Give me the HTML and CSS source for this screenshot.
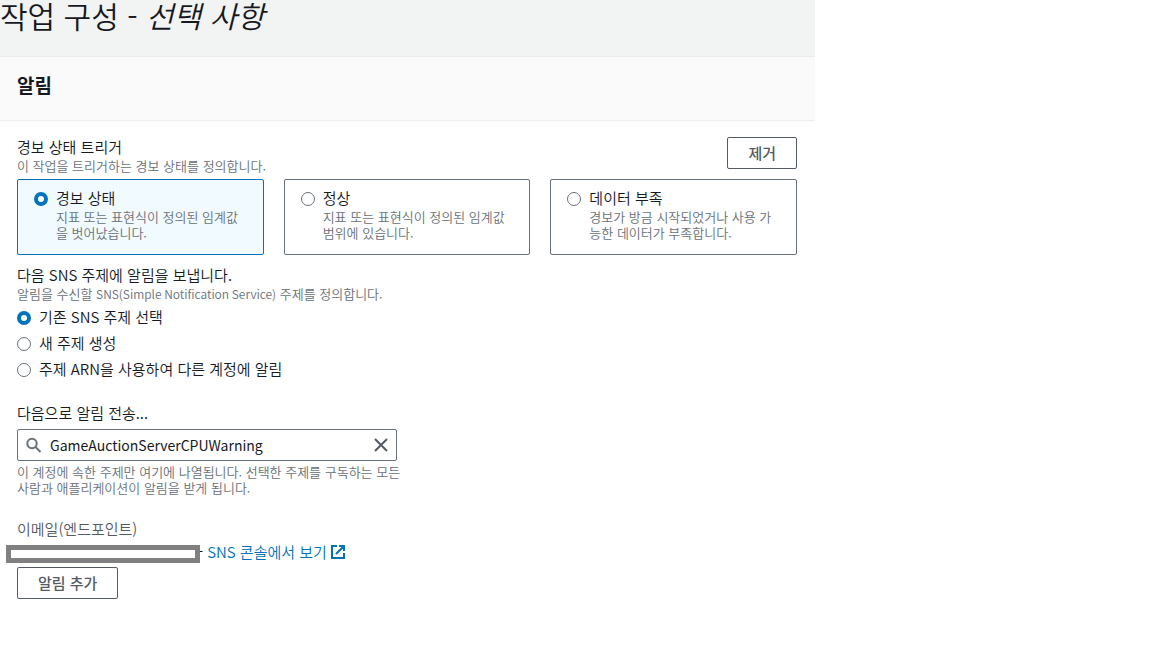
FILE: index.html
```html
<!DOCTYPE html>
<html lang="ko">
<head>
<meta charset="utf-8">
<meta name="viewport" content="width=device-width, initial-scale=1">
<title>작업 구성</title>
<link rel="stylesheet" href="styles.css">
</head>
<body>
<main class="page">
  <header class="page-header">
    <h1 class="page-title">작업 구성 - <em>선택 사항</em></h1>
  </header>
  <div class="panel-header">
    <h2 class="panel-title">알림</h2>
  </div>
  <form class="panel-body">
    <section class="trigger">
      <div class="trigger-head">
        <div>
          <h3 class="label" id="trigger-label">경보 상태 트리거</h3>
          <p class="hint">이 작업을 트리거하는 경보 상태를 정의합니다.</p>
        </div>
        <button class="button button-remove" type="button">제거</button>
      </div>
      <div class="tiles" role="radiogroup" aria-labelledby="trigger-label">
        <label class="tile">
          <input class="radio" type="radio" name="state" checked>
          <span class="tile-text"><span class="tile-title">경보 상태</span><span class="hint">지표 또는 표현식이 정의된 임계값을 벗어났습니다.</span></span>
        </label>
        <label class="tile">
          <input class="radio" type="radio" name="state">
          <span class="tile-text"><span class="tile-title">정상</span><span class="hint">지표 또는 표현식이 정의된 임계값 범위에 있습니다.</span></span>
        </label>
        <label class="tile">
          <input class="radio" type="radio" name="state">
          <span class="tile-text"><span class="tile-title">데이터 부족</span><span class="hint">경보가 방금 시작되었거나 사용 가능한 데이터가 부족합니다.</span></span>
        </label>
      </div>
    </section>
    <section class="topic">
      <h3 class="label" id="topic-label">다음 SNS 주제에 알림을 보냅니다.</h3>
      <p class="hint">알림을 수신할 <span class="latin" lang="en">SNS(Simple Notification Service)</span> 주제를 정의합니다.</p>
      <div class="options" role="radiogroup" aria-labelledby="topic-label">
        <label class="option"><input class="radio" type="radio" name="topic" checked>기존 SNS 주제 선택</label>
        <label class="option"><input class="radio" type="radio" name="topic">새 주제 생성</label>
        <label class="option"><input class="radio" type="radio" name="topic">주제 ARN을 사용하여 다른 계정에 알림</label>
      </div>
    </section>
    <section class="recipient">
      <label class="label" for="topic-name">다음으로 알림 전송...</label>
      <div class="search">
        <svg class="search-icon" viewBox="0 0 16 16" aria-hidden="true"><circle cx="6" cy="6.5" r="4.7"/><path d="M9.5 10l5 5"/></svg>
        <input class="search-input" id="topic-name" type="text" value="GameAuctionServerCPUWarning">
        <button class="clear" type="button" aria-label="지우기"><svg class="clear-icon" viewBox="0 0 14 14" aria-hidden="true"><path d="M1 1l12 12M13 1L1 13"/></svg></button>
      </div>
      <p class="hint">이 계정에 속한 주제만 여기에 나열됩니다. 선택한 주제를 구독하는 모든 사람과 애플리케이션이 알림을 받게 됩니다.</p>
    </section>
    <section class="endpoint">
      <h3 class="label label-muted">이메일(엔드포인트)</h3>
      <div class="endpoint-row">
        <span class="masked"></span>
        <span>-</span>
        <a class="link" href="#">SNS 콘솔에서 보기<svg class="link-icon" viewBox="0 0 14 14" aria-hidden="true"><path d="M6 1H1v12h12V8M8 1h5v5M13 1L5 9"/></svg></a>
      </div>
    </section>
    <button class="button" type="button">알림 추가</button>
  </form>
</main>
</body>
</html>
```
FILE: styles.css
```css
* {
  box-sizing: border-box;
}

body {
  margin: 0;
  background: #fff;
  color: #16191f;
  font: 350 15px/22px "Noto Sans CJK KR", "Noto Sans", sans-serif;
}

h1, h2, h3, p {
  margin: 0;
}

.page {
  max-width: 815px;
}

.page-header {
  height: 56px;
  background: #f2f3f3;
}

.page-title {
  font-size: 30px;
  font-weight: 350;
  line-height: 30px;
}

.panel-header {
  padding: 14px 17px 21px;
  background: #fafafa;
  border-top: 1px solid #eaeded;
  border-bottom: 1px solid #eaeded;
}

.panel-title {
  font-size: 19px;
  font-weight: 700;
  line-height: 28px;
}

.panel-body {
  padding: 15px 18px 16px 17px;
}

.label {
  display: block;
  font-size: 15px;
  font-weight: 350;
  line-height: 22px;
}

.label-muted {
  color: #545b64;
}

.hint {
  color: #687078;
  font-size: 13px;
  line-height: 16px;
}

.latin {
  font-size: 12px;
}

.trigger-head {
  display: flex;
  justify-content: space-between;
  align-items: flex-start;
  min-height: 43px;
}

.button {
  height: 32px;
  padding: 0 20px;
  background: #fff;
  border: 1px solid #545b64;
  border-radius: 2px;
  color: #545b64;
  font: 500 15px/20px "Noto Sans CJK KR", "Noto Sans", sans-serif;
}

.button-remove {
  margin-top: 1px;
}

.tiles {
  display: grid;
  grid-template-columns: repeat(3, 1fr);
  gap: 20px;
}

.tile {
  display: flex;
  gap: 8px;
  min-height: 76px;
  padding: 7px 16px;
  border: 1px solid #687078;
  border-radius: 2px;
  word-break: break-all;
}

.tile:has(:checked) {
  background: #f1faff;
  border-color: #0073bb;
}

.tile-text {
  flex: 1;
}

.tile-title,
.tile .hint {
  display: block;
}

.radio {
  appearance: none;
  flex: none;
  width: 14px;
  height: 14px;
  margin: 5px 0 3px;
  background: #fff;
  border: 1px solid #687078;
  border-radius: 50%;
}

.radio:checked {
  border: 4px solid #0073bb;
}

.topic {
  margin-top: 9px;
}

.options {
  display: grid;
  gap: 4px;
  margin-top: 4px;
}

.option {
  display: flex;
  gap: 8px;
}

.recipient {
  max-width: 380px;
  margin-top: 22px;
}

.recipient .hint {
  margin-right: -8px;
}

.search {
  display: flex;
  align-items: center;
  height: 32px;
  margin: 5px 0 3px;
  padding: 0 8px;
  border: 1px solid #687078;
  border-radius: 2px;
}

.search-icon {
  width: 16px;
  height: 16px;
  fill: none;
  stroke: #687078;
  stroke-width: 2;
}

.search-input {
  flex: 1;
  min-width: 0;
  padding: 0 8px;
  border: 0;
  outline: 0;
  color: #16191f;
  font: 14px/22px "Noto Sans CJK KR", "Noto Sans", sans-serif;
}

.clear {
  display: flex;
  padding: 0;
  background: none;
  border: 0;
}

.clear-icon {
  width: 14px;
  height: 14px;
  fill: none;
  stroke: #545b64;
  stroke-width: 2;
}

.endpoint {
  margin-top: 22px;
}

.endpoint-row {
  display: flex;
  gap: 4px;
}

.masked {
  width: 194px;
  height: 18px;
  margin: 5px -6px 0 -11px;
  background: #fff;
  border: 5px solid #808080;
  z-index: 1;
}

.link {
  display: flex;
  align-items: center;
  gap: 4px;
  color: #0073bb;
  text-decoration: none;
}

.link-icon {
  width: 14px;
  height: 14px;
  fill: none;
  stroke: #0073bb;
  stroke-width: 2;
}

.endpoint + .button {
  margin-top: 4px;
}
```
